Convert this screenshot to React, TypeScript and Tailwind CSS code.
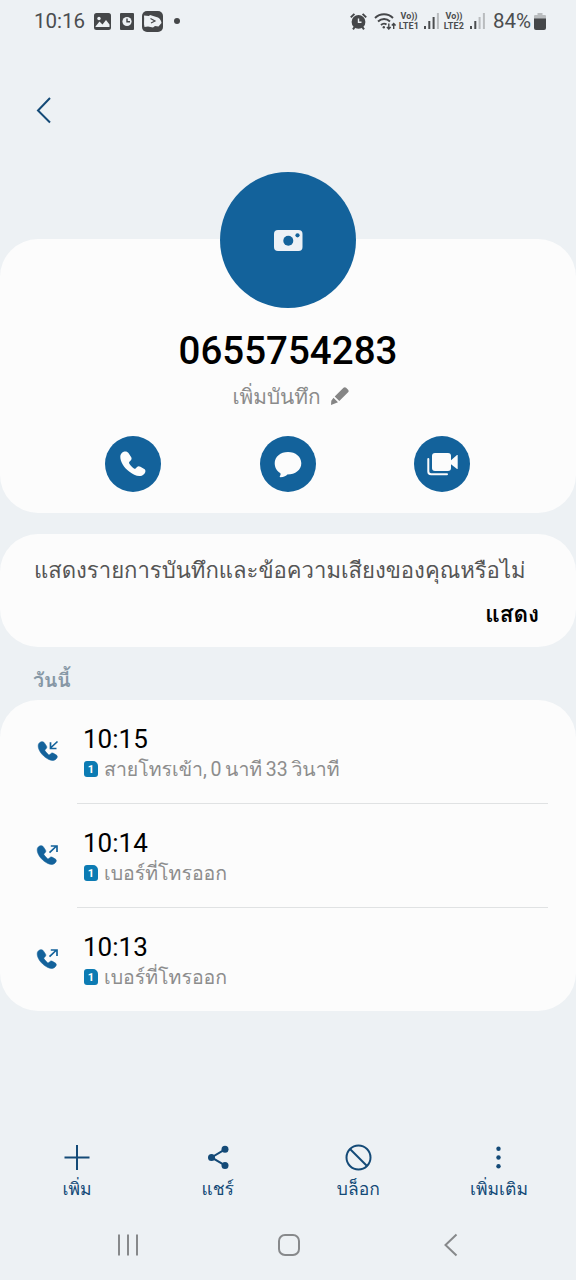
import type { ReactNode } from "react";

type CallKind = "incoming" | "outgoing";

const calls: { time: string; detail: string; kind: CallKind }[] = [
  { time: "10:15", detail: "สายโทรเข้า, 0 นาที 33 วินาที", kind: "incoming" },
  { time: "10:14", detail: "เบอร์ที่โทรออก", kind: "outgoing" },
  { time: "10:13", detail: "เบอร์ที่โทรออก", kind: "outgoing" },
];

const HANDSET =
  "M3.800.8C1.700 1.700.3 3.500.3 6c0 5.500 4.200 11.500 9.200 15.400 3.600 2.800 8 5 11.500 4.600 2.400-.3 4.300-1.900 5.200-4 .5-1.300.1-2.500-1-3.200l-4-2.400c-1.300-.8-2.600-.7-3.500.2l-1.500 1.500c-.5.5-1.100.5-1.700.1-1.900-1.400-3.600-3.300-4.900-5.300-.4-.7-.3-1.300.2-1.800l1.300-1.200c1-.9 1.200-2.200.6-3.400L8.800 2.100C8 .6 5.600 0 3.800.8Z";

/* ── ステータスバー ── */
function VoLte({ sim }: { sim: number }) {
  return (
    <div className="w-[22px] shrink-0 text-center font-bold text-[#4b4d4f]">
      <div className="text-[9px] leading-[10.500px]">Vo))</div>
      <div className="text-[9px] leading-[10.500px] tracking-[0.2px]">LTE{sim}</div>
    </div>
  );
}

function Signal({ level }: { level: number }) {
  return (
    <svg width="15" height="16" viewBox="0 0 15 16" className="shrink-0">
      {[3, 8, 12, 16].map((h, i) => (
        <rect key={i} x={i * 4.300} y={16 - h} width="2" height={h} fill={i < level ? "#4b4d4f" : "#b9bcbe"} />
      ))}
    </svg>
  );
}

function StatusBar() {
  return (
    <div className="flex h-[42px] items-center pl-[34px] pr-[30px] text-[#4b4d4f]">
      <span className="w-[52px] text-[20.500px] leading-none">10:16</span>
      <svg width="17" height="17" viewBox="0 0 17 17" className="ml-2">
        <rect width="17" height="17" rx="2.500" fill="#454749" />
        <circle cx="5" cy="5.500" r="1.700" fill="#edf1f4" />
        <path d="M1.500 13.500 5.500 8.500l3 3 3.500-4.500 3.500 4.500v2.500h-14Z" fill="#edf1f4" />
      </svg>
      <svg width="14" height="17" viewBox="0 0 14 17" className="ml-[9px]">
        <rect width="14" height="17" rx="1" fill="#454749" />
        <circle cx="7" cy="8.500" r="4.600" fill="#edf1f4" />
        <path d="M7 5.500v3.300h3" stroke="#454749" strokeWidth="1.400" fill="none" />
      </svg>
      <svg width="21" height="21" viewBox="0 0 21 21" className="ml-2">
        <rect width="21" height="21" rx="5" fill="#454749" />
        <path d="M2 4.500 7 5l1-1 8 2.500c2 1 3.500 4 3.500 5.500l-3 3.500L13 15l-2 1.500-5-1-3.500.5C1.500 13 2.500 9 2 4.500Z" fill="#edf1f4" />
        <path d="m8.500 7.500 4.500 2.500-4 2" stroke="#454749" strokeWidth="1.200" fill="none" />
      </svg>
      <span className="ml-[11px] size-[6px] rounded-full bg-[#454749]" />

      <div className="ml-auto flex items-center">
        <svg width="17" height="17" viewBox="0 0 17 17">
          <circle cx="8.500" cy="8.900" r="6.900" fill="#454749" />
          <path d="M.8 4.400 4.400.9M16.200 4.400 12.600.9M3 16.400l2-2.900M14 16.400l-2-2.900" stroke="#454749" strokeWidth="2" />
          <path d="M8.500 5.500v3.700h3" stroke="#edf1f4" strokeWidth="1.400" fill="none" />
        </svg>
        <svg width="23" height="17" viewBox="0 0 23 17" className="ml-[7px]" fill="none" stroke="#454749" strokeWidth="1.900">
          <path d="M1 5c5-5 13-5 18 0M4 8.500c3.600-3.400 8.600-3.400 12 0M7 12c1.700-1.600 3.800-1.700 5.500-.5" />
          <circle cx="9.800" cy="14.300" r="1.200" fill="#454749" stroke="none" />
          <path d="M14.800 10.500v5.500m-1.900-2 1.900 2 1.900-2M19.700 16v-5.500m-1.900 2 1.900-2 1.900 2" strokeWidth="1.400" />
        </svg>
        <span className="w-px" />
        <VoLte sim={1} />
        <span className="w-1" />
        <Signal level={3} />
        <span className="w-1" />
        <VoLte sim={2} />
        <span className="w-[5px]" />
        <Signal level={2} />
        <span className="ml-[8px] w-[39px] text-[20.500px] leading-none">84%</span>
        <svg width="12" height="17" viewBox="0 0 12 17" className="ml-[2px]">
          <path d="M3.500 0h5v2H11a1 1 0 0 1 1 1v3H0V3a1 1 0 0 1 1-1h2.500Z" fill="#b9bcbe" />
          <path d="M0 5.500h12V15a2 2 0 0 1-2 2H2a2 2 0 0 1-2-2Z" fill="#454749" />
        </svg>
      </div>
    </div>
  );
}

/* ── 連絡先カードの丸ボタン ── */
function RoundButton({ label, children }: { label: string; children: ReactNode }) {
  return (
    <button aria-label={label} className="flex size-14 items-center justify-center rounded-full bg-[#13629b]">
      {children}
    </button>
  );
}

function ContactCard() {
  return (
    <section className="mt-[97px] flex h-[274px] flex-col items-center rounded-[38px] bg-[#fcfcfc]">
      <div className="-mt-[67px] flex size-[136px] shrink-0 items-center justify-center rounded-full bg-[#13629b]">
        <svg width="29" height="21" viewBox="0 0 29 21">
          <rect width="28.500" height="21" rx="4" fill="#edf1f6" />
          <circle cx="14.300" cy="10.700" r="5" fill="#13629b" />
          <circle cx="23.500" cy="5.300" r="2.100" fill="#13629b" />
        </svg>
      </div>
      <h1 className="mt-[21px] text-[38.500px] font-medium leading-[44px] text-black">0655754283</h1>
      <div className="mt-[9px] flex h-[30px] items-center gap-[10px] pl-[5px] text-[#8b8b8b]">
        <span className="whitespace-nowrap text-[20.800px] leading-[30px]">เพิ่มบันทึก</span>
        <svg width="18" height="18" viewBox="0 0 18 18" fill="#858585" className="-mt-[3px]">
          <path d="M12.500.8a2 2 0 0 1 2.600 0l2 1.900a2 2 0 0 1 0 2.600L8.300 14 3.700 9.500ZM2.500 10.800 7 15.300 0 18l.3-4.200Z" />
        </svg>
      </div>
      <div className="mr-px mt-6 flex gap-[98.500px]">
        <RoundButton label="โทร">
          <svg width="26" height="26" viewBox="0 0 27 27" fill="#fcfcfc">
            <path d={HANDSET} />
          </svg>
        </RoundButton>
        <RoundButton label="ข้อความ">
          <svg width="28" height="26" viewBox="0 0 28 26" fill="#fcfcfc" className="mt-[2px]">
            <path d="M14 0c7.500 0 13.300 4.600 13.300 11.300S21.500 22.500 13.300 22.500c-1 1.300-3.300 2.600-6.900 2.700-.7 0-.9-.6-.5-1.100.8-1 .9-2.200.3-3.100C2.800 19.200.700 15.600.700 11.300.700 4.600 6.500 0 14 0Z" />
          </svg>
        </RoundButton>
        <RoundButton label="วิดีโอคอล">
          <svg width="31" height="23" viewBox="0 0 31 23" fill="#fcfcfc">
            <rect x="5" y="0" width="19" height="18" rx="3" />
            <path d="m24 7.300 6-5.300c.5-.3.700 0 .7.500v13c0 .5-.3.700-.7.400l-6-4.600Z" />
            <path d="M1.300 6v12.500a2.800 2.800 0 0 0 2.800 2.800H20" fill="none" stroke="#fcfcfc" strokeWidth="2" strokeLinecap="round" />
          </svg>
        </RoundButton>
      </div>
    </section>
  );
}

/* ── 通話履歴 ── */
function CallIcon({ kind }: { kind: CallKind }) {
  return (
    <svg width="23" height="21" viewBox="0 0 23 21" className="shrink-0" fill="none" stroke="#13629b" strokeWidth="1.700">
      <g transform={kind === "incoming" ? "translate(2 1.400) scale(.73)" : "translate(1 1.400) scale(.73)"}>
        <path d={HANDSET} fill="#13629b" stroke="#13629b" strokeWidth=".8" />
      </g>
      {kind === "incoming" ? (
        <path d="M21.500 1.500l-7 6.500M14.500 2.200v6.300h6" />
      ) : (
        <path d="M13.500 8.700l7-6.700M14.800 2H21V8" />
      )}
    </svg>
  );
}

function SimBadge() {
  return (
    <span className="mb-[2px] flex h-4 w-[14px] items-center justify-center rounded-[3px] rounded-tr-[5px] bg-[#0c7bb3] text-[11px] font-bold leading-none text-white">
      1
    </span>
  );
}

/* ── 下部アクション ── */
const actions: { label: string; icon: ReactNode }[] = [
  { label: "เพิ่ม", icon: <path d="M14 2v25M1.500 14.500h25" /> },
  {
    label: "แชร์",
    icon: (
      <>
        <path d="M21 6.400 7.500 14.400 21 22.400" />
        <g fill="#144a77" stroke="none">
          <circle cx="21" cy="6.300" r="3.500" />
          <circle cx="7.500" cy="14.400" r="3.500" />
          <circle cx="21" cy="22.500" r="3.500" />
        </g>
      </>
    ),
  },
  {
    label: "บล็อก",
    icon: (
      <>
        <circle cx="14.500" cy="14.500" r="12" />
        <path d="m6 6 17 17" />
      </>
    ),
  },
  {
    label: "เพิ่มเติม",
    icon: (
      <g fill="#144a77" stroke="none">
        <circle cx="13.500" cy="5.700" r="2.200" />
        <circle cx="13.500" cy="14.500" r="2.200" />
        <circle cx="13.500" cy="23.200" r="2.200" />
      </g>
    ),
  },
];

export default function App() {
  return (
    <div className="flex h-[1280px] w-[576px] flex-col overflow-hidden bg-[#edf1f4] font-[Roboto,Loma,sans-serif]">
      <StatusBar />

      <header className="flex h-[100px] items-center pl-[36px] pt-[36px]">
        <svg width="16" height="28" viewBox="0 0 16 28" fill="none" stroke="#144a77" strokeWidth="2">
          <path d="M14 2 2 14.500 14 26.500" />
        </svg>
      </header>

      <ContactCard />

      <section className="mt-[21px] flex h-[113px] flex-col rounded-[38px] bg-[#fcfcfc] px-[34px] pt-[21px]">
        <p className="whitespace-nowrap text-[22.100px] leading-[30px] text-[#555]">
          แสดงรายการบันทึกและข้อความเสียงของคุณหรือไม่
        </p>
        <button className="mr-[3px] mt-[14px] self-end text-[22.500px] font-bold leading-[30px] text-black">แสดง</button>
      </section>

      <h2 className="mt-[18px] h-[35px] pl-[33px] text-[19.500px] font-bold leading-[32px] text-[#8697a5]">วันนี้</h2>

      <section className="h-[311px] rounded-[38px] bg-[#fcfcfc]">
        {calls.map((call, i) => (
          <div key={call.time} className="flex h-[104px] pl-9">
            <div className="w-[41px] pt-10">
              <CallIcon kind={call.kind} />
            </div>
            <div className={`mr-7 flex-1 pl-[7px] pt-6 ${i < calls.length - 1 ? "border-b border-[#e0e2e3]" : ""}`}>
              <div className="-ml-px text-[26px] leading-[30px] text-black">{call.time}</div>
              <div className="mt-[1px] flex h-[30px] items-center gap-[6px] text-[#8d8d8d]">
                <SimBadge />
                <span className="whitespace-nowrap text-[19.500px] leading-[30px] [word-spacing:-1.200px]">{call.detail}</span>
              </div>
            </div>
          </div>
        ))}
      </section>

      <nav className="mt-[132px] flex h-[62px] justify-between px-[7px]">
        {actions.map((a) => (
          <button key={a.label} className="flex w-[140px] flex-col items-center text-[#144a77]">
            <svg width="28" height="28" viewBox="0 0 28 28" fill="none" stroke="#144a77" strokeWidth="2">
              {a.icon}
            </svg>
            <span className="mt-[4px] text-[17.500px] leading-[28px]">{a.label}</span>
          </button>
        ))}
      </nav>

      {/* ── ナビゲーションバー ── */}
      <div className="mt-[17px] flex h-[46px] items-center pl-[117px]">
        <svg width="22" height="22" viewBox="0 0 22 22" stroke="#87898b" strokeWidth="2">
          <path d="M2 .5v21M11 .5v21M20 .5v21" />
        </svg>
        <svg width="24" height="24" viewBox="0 0 24 24" fill="none" stroke="#87898b" strokeWidth="2" className="ml-[138px]">
          <rect x="2" y="2" width="20" height="20" rx="6" />
        </svg>
        <svg width="15" height="24" viewBox="0 0 15 24" fill="none" stroke="#87898b" strokeWidth="2" className="ml-[142px]">
          <path d="M13.500 1.500 2.500 12l11 10.500" />
        </svg>
      </div>
    </div>
  );
}
